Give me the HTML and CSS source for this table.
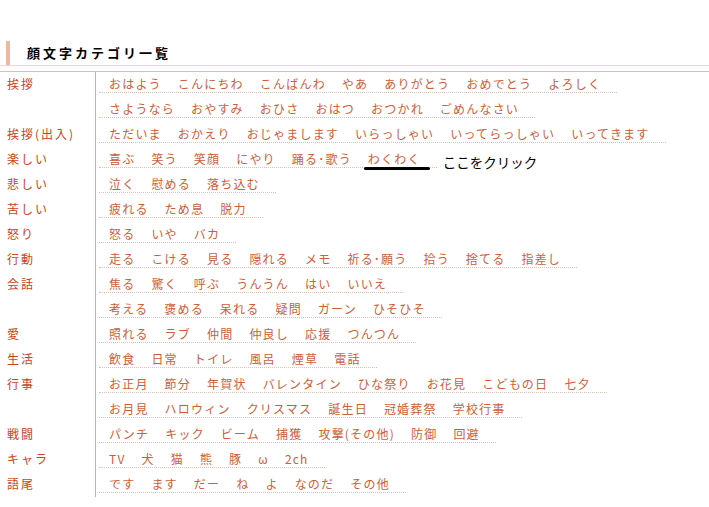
FILE: index.html
```html
<!DOCTYPE html>
<html lang="ja">
<head>
<meta charset="utf-8">
<title>顔文字カテゴリ一覧</title>
<link rel="stylesheet" href="styles.css">
</head>
<body>
<div class="page">
  <h2 class="title"><span class="title-text">顔文字カテゴリ一覧</span></h2>
  <div class="table">
    <div class="group">
      <div class="cat">挨拶</div>
      <div class="lists">
        <ul class="links"><li>おはよう</li><li>こんにちわ</li><li>こんばんわ</li><li>やあ</li><li>ありがとう</li><li>おめでとう</li><li>よろしく</li></ul>
        <ul class="links"><li>さようなら</li><li>おやすみ</li><li>おひさ</li><li>おはつ</li><li>おつかれ</li><li>ごめんなさい</li></ul>
      </div>
    </div>
    <div class="group">
      <div class="cat">挨拶(出入)</div>
      <div class="lists">
        <ul class="links"><li>ただいま</li><li>おかえり</li><li>おじゃまします</li><li>いらっしゃい</li><li>いってらっしゃい</li><li>いってきます</li></ul>
      </div>
    </div>
    <div class="group">
      <div class="cat">楽しい</div>
      <div class="lists">
        <ul class="links"><li>喜ぶ</li><li>笑う</li><li>笑顔</li><li>にやり</li><li>踊る･歌う</li><li class="target">わくわく<span class="mark"></span><span class="note">ここをクリック</span></li></ul>
      </div>
    </div>
    <div class="group">
      <div class="cat">悲しい</div>
      <div class="lists">
        <ul class="links"><li>泣く</li><li>慰める</li><li>落ち込む</li></ul>
      </div>
    </div>
    <div class="group">
      <div class="cat">苦しい</div>
      <div class="lists">
        <ul class="links"><li>疲れる</li><li>ため息</li><li>脱力</li></ul>
      </div>
    </div>
    <div class="group">
      <div class="cat">怒り</div>
      <div class="lists">
        <ul class="links"><li>怒る</li><li>いや</li><li>バカ</li></ul>
      </div>
    </div>
    <div class="group">
      <div class="cat">行動</div>
      <div class="lists">
        <ul class="links"><li>走る</li><li>こける</li><li>見る</li><li>隠れる</li><li>メモ</li><li>祈る･願う</li><li>拾う</li><li>捨てる</li><li>指差し</li></ul>
      </div>
    </div>
    <div class="group">
      <div class="cat">会話</div>
      <div class="lists">
        <ul class="links"><li>焦る</li><li>驚く</li><li>呼ぶ</li><li>うんうん</li><li>はい</li><li>いいえ</li></ul>
        <ul class="links"><li>考える</li><li>褒める</li><li>呆れる</li><li>疑問</li><li>ガーン</li><li>ひそひそ</li></ul>
      </div>
    </div>
    <div class="group">
      <div class="cat">愛</div>
      <div class="lists">
        <ul class="links"><li>照れる</li><li>ラブ</li><li>仲間</li><li>仲良し</li><li>応援</li><li>つんつん</li></ul>
      </div>
    </div>
    <div class="group">
      <div class="cat">生活</div>
      <div class="lists">
        <ul class="links"><li>飲食</li><li>日常</li><li>トイレ</li><li>風呂</li><li>煙草</li><li>電話</li></ul>
      </div>
    </div>
    <div class="group">
      <div class="cat">行事</div>
      <div class="lists">
        <ul class="links"><li>お正月</li><li>節分</li><li>年賀状</li><li>バレンタイン</li><li>ひな祭り</li><li>お花見</li><li>こどもの日</li><li>七夕</li></ul>
        <ul class="links"><li>お月見</li><li>ハロウィン</li><li>クリスマス</li><li>誕生日</li><li>冠婚葬祭</li><li>学校行事</li></ul>
      </div>
    </div>
    <div class="group">
      <div class="cat">戦闘</div>
      <div class="lists">
        <ul class="links"><li>パンチ</li><li>キック</li><li>ビーム</li><li>捕獲</li><li>攻撃(その他)</li><li>防御</li><li>回避</li></ul>
      </div>
    </div>
    <div class="group">
      <div class="cat">キャラ</div>
      <div class="lists">
        <ul class="links"><li>TV</li><li>犬</li><li>猫</li><li>熊</li><li>豚</li><li>ω</li><li>2ch</li></ul>
      </div>
    </div>
    <div class="group">
      <div class="cat">語尾</div>
      <div class="lists">
        <ul class="links"><li>です</li><li>ます</li><li>だー</li><li>ね</li><li>よ</li><li>なのだ</li><li>その他</li></ul>
      </div>
    </div>
  </div>
</div>
</body>
</html>
```

FILE: styles.css
```css
html, body {
  margin: 0;
  padding: 0;
  background: #ffffff;
}

body {
  font-family: "Noto Sans CJK JP", "Noto Sans", sans-serif;
  font-size: 12px;
}

.page {
  padding-top: 41px;
}

.title {
  margin: 0;
  padding-left: 6px;
  border-bottom: 1px solid #f3d3c9;
  font-size: 13px;
  font-weight: bold;
  color: #000;
}

.title-text {
  display: block;
  height: 24px;
  line-height: 24px;
  padding-left: 17px;
  border-left: 4px solid #efb6a4;
  letter-spacing: 3px;
}

.table {
  margin-top: 5px;
  border-top: 1px solid #e4c46c;
}

.group {
  display: grid;
  grid-template-columns: 96px 1fr;
}

.cat {
  border-right: 1px solid #d9b460;
  padding: 4px 0 0 7px;
  line-height: 16px;
  color: #c8441a;
  letter-spacing: 2px;
}

.lists {
  display: flex;
  flex-direction: column;
  align-items: flex-start;
}

.links {
  display: flex;
  margin: 0 0 4px 3px;
  padding: 4px 0 0 10px;
  list-style: none;
  border-bottom: 1px dotted #d8c4bc;
  line-height: 16px;
}

.links li {
  color: #cc5e3a;
  letter-spacing: 1.2px;
  padding-right: 16px;
  white-space: nowrap;
}

.target {
  position: relative;
}

.mark {
  position: absolute;
  left: -4px;
  top: 16px;
  width: 66px;
  height: 3px;
  border-radius: 2px;
  background: #000;
}

.note {
  position: absolute;
  left: 75px;
  top: 1px;
  font-size: 13.5px;
  line-height: 20px;
  letter-spacing: 0;
  color: #000;
}
```
